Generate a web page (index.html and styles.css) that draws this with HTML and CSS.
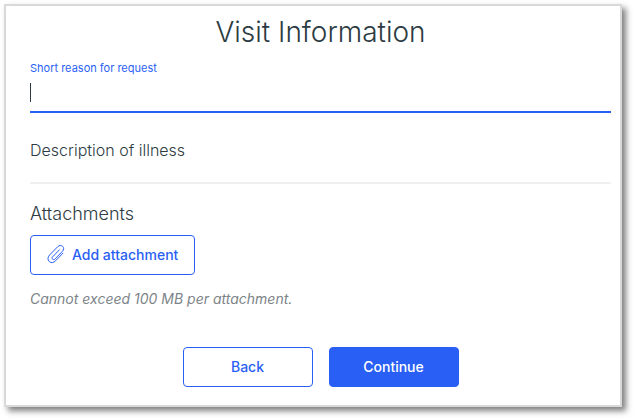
FILE: index.html
```html
<!DOCTYPE html>
<html lang="en">
<head>
    <meta charset="UTF-8">
    <meta name="viewport" content="width=device-width, initial-scale=1.0">
    <title>Visit Information</title>
    <link rel="stylesheet" href="styles.css">
</head>
<body>
    <main class="card">
        <h1>Visit Information</h1>

        <form class="visit-form">
            <!-- Reason -->
            <div class="field">
                <label for="reason">Short reason for request</label>
                <input type="text" id="reason" name="reason" class="reason-input">
            </div>

            <!-- Description -->
            <div class="field description">
                <input type="text" id="description" name="description" placeholder="Description of illness" aria-label="Description of illness">
            </div>

            <!-- Attachments -->
            <section class="attachments">
                <h2>Attachments</h2>
                <button type="button" class="btn btn-attach">
                    <svg class="clip" viewBox="0 0 18 20" aria-hidden="true">
                        <path d="M12.400 5.800 5.800 12.700c-.9.900-.8 1.900-.2 2.500.7.600 1.700.600 2.500-.3l7.400-7.700c1.500-1.500 1.500-3.500.2-4.800-1.400-1.300-3.500-1.200-5 .3L2.600 11c-2.100 2.200-2.100 4.900-.4 6.500 1.800 1.600 4.400 1.400 6.300-.6l7.400-7.700"/>
                    </svg>
                    Add attachment
                </button>
                <p class="hint">Cannot exceed 100 MB per attachment.</p>
            </section>

            <div class="actions">
                <button type="button" class="btn">Back</button>
                <button type="submit" class="btn btn-primary">Continue</button>
            </div>
        </form>
    </main>
</body>
</html>
```

FILE: styles.css
```css
* {
    box-sizing: border-box;
}
body {
    margin: 0;
    padding: 4px 12px 12px 4px;
    background-color: #fff;
    color: #2d3b43;
    font-family: Inter, sans-serif;
}

.card {
    padding: 8px 9px 18px 24px;
    background: #fff;
    border: 2px solid #d9d9d9;
    box-shadow: 4px 4px 6px rgba(0, 0, 0, 0.5);
}
h1 {
    margin: 0;
    font-size: 28px;
    font-weight: 300;
    line-height: 36px;
    text-align: center;
}

/* Fields */
.field label {
    display: block;
    padding-top: 10px;
    color: #2a5ff5;
    font-size: 11px;
    font-weight: 400;
    line-height: 16px;
}
.field input {
    display: block;
    width: 100%;
    height: 37px;
    padding: 0;
    border: none;
    border-bottom: 2px solid #f0f0f0;
    border-radius: 0;
    outline: none;
    background: none;
    color: #2d3b43;
    font-family: inherit;
    font-size: 16px;
    font-weight: 300;
}
.field input::placeholder {
    color: #2d3b43;
    opacity: 1;
}
/* steady caret, does not blink */
.field .reason-input {
    border-bottom-color: #2a5ff5;
    background: linear-gradient(#2d3b43, #2d3b43) 0 7px / 1px 19px no-repeat;
    caret-color: transparent;
}
.description input {
    height: 71px;
    padding-top: 4px;
}

/* Attachments */
h2 {
    margin: 18px 0 9px;
    font-size: 18px;
    font-weight: 300;
    line-height: 24px;
}
.btn {
    display: flex;
    align-items: center;
    justify-content: center;
    width: 130px;
    height: 40px;
    padding-bottom: 2px;
    border: 1px solid #2a5ff5;
    border-radius: 4px;
    background: #fff;
    color: #2a5ff5;
    font-family: inherit;
    font-size: 14px;
    font-weight: 500;
    cursor: pointer;
}
.btn-attach {
    width: auto;
    padding: 0 16px 2px;
    gap: 7px;
}
.clip {
    width: 18px;
    height: 20px;
    fill: none;
    stroke: currentColor;
    stroke-width: 1;
    stroke-linecap: round;
    stroke-linejoin: round;
}
.hint {
    margin: 14px 0 0;
    color: #7d8488;
    font-size: 14px;
    font-style: italic;
    line-height: 20px;
}

.actions {
    display: flex;
    justify-content: center;
    gap: 16px;
    margin-top: 38px;
}
.btn-primary {
    background: #2a5ff5;
    color: #fff;
}
```
